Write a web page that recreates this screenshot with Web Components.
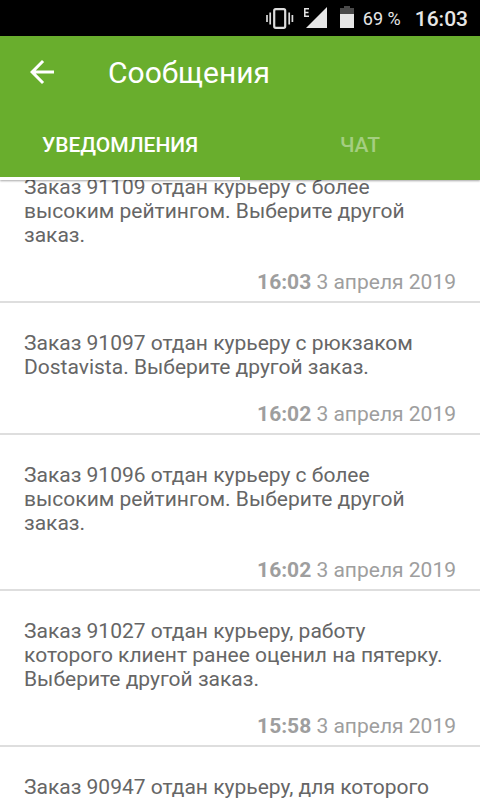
<!DOCTYPE html>
<html lang="ru">
<head>
  <meta charset="utf-8">
  <meta name="viewport" content="width=device-width, initial-scale=1">
  <title>Сообщения</title>
  <style>
    body {
      margin: 0;
      font-family: Roboto, "Noto Sans", sans-serif;
      background: #fff;
    }
  </style>
</head>
<body>
  <messages-screen>
    <status-bar slot="top" battery="69 %" time="16:03"></status-bar>
    <app-header slot="top" heading="Сообщения">
      <header-tab selected>УВЕДОМЛЕНИЯ</header-tab>
      <header-tab>ЧАТ</header-tab>
    </app-header>
    <message-item time="16:03" date="3 апреля 2019">Заказ 91109 отдан курьеру с более высоким рейтингом. Выберите другой заказ.</message-item>
    <message-item time="16:02" date="3 апреля 2019">Заказ 91097 отдан курьеру с рюкзаком Dostavista. Выберите другой заказ.</message-item>
    <message-item time="16:02" date="3 апреля 2019">Заказ 91096 отдан курьеру с более высоким рейтингом. Выберите другой заказ.</message-item>
    <message-item time="15:58" date="3 апреля 2019">Заказ 91027 отдан курьеру, работу которого клиент ранее оценил на пятерку. Выберите другой заказ.</message-item>
    <message-item>Заказ 90947 отдан курьеру, для которого</message-item>
  </messages-screen>

  <script>
    // Системная строка: вибрация, сеть, батарея, часы
    class StatusBar extends HTMLElement {
      constructor() {
        super();
        const shadow = this.attachShadow({ mode: 'open' });
        shadow.innerHTML = `
          <style>
            :host {
              display: flex;
              align-items: center;
              justify-content: flex-end;
              height: 36px;
              padding: 0 12px;
              background: #000;
              color: #e6e6e6;
            }
            svg { display: block; flex: none; }
            .signal { margin-left: 10px; }
            .battery { margin-left: 12px; }
            .level { margin-left: 9px; font-size: 18px; line-height: 36px; padding-top: 1px; }
            .clock { margin-left: 14px; font-size: 21px; font-weight: 500; line-height: 36px; padding-top: 1px; }
          </style>
          <svg width="28" height="36" viewBox="0 0 28 36" aria-hidden="true">
            <rect x="8.2" y="9.2" width="11" height="18.6" rx="1.5" fill="none" stroke="#dcdcdc" stroke-width="2.2"/>
            <path d="M1 15v7M4.2 12.5v12M23.2 12.5v12M26.4 15v7" fill="none" stroke="#dcdcdc" stroke-width="1.7"/>
          </svg>
          <svg class="signal" width="24" height="36" viewBox="0 0 24 36" aria-hidden="true">
            <path d="M5 8.7H.8v7.6H5M.8 12.4h3.7" fill="none" stroke="#e6e6e6" stroke-width="1.5"/>
            <path d="M23 7v21H2z" fill="#e6e6e6"/>
          </svg>
          <svg class="battery" width="14" height="36" viewBox="0 0 14 36" aria-hidden="true">
            <path d="M4 6h6v2h4v6H0V8h4z" fill="#4a4a4a"/>
            <path d="M0 14h14v14H0z" fill="#e6e6e6"/>
          </svg>
          <span class="level"></span>
          <span class="clock"></span>
        `;
      }

      connectedCallback() {
        this.shadowRoot.querySelector('.level').textContent = this.getAttribute('battery');
        this.shadowRoot.querySelector('.clock').textContent = this.getAttribute('time');
      }
    }

    // Зелёная шапка с кнопкой «назад» и вкладками
    class AppHeader extends HTMLElement {
      constructor() {
        super();
        const shadow = this.attachShadow({ mode: 'open' });
        shadow.innerHTML = `
          <style>
            :host {
              display: block;
              background: #69ae2d;
              color: #fff;
              box-shadow: 0 1px 2px rgba(0, 0, 0, 0.35);
            }
            .toolbar { display: flex; align-items: center; height: 72px; }
            button {
              display: flex;
              align-items: center;
              justify-content: center;
              width: 84px;
              height: 72px;
              padding: 0;
              border: none;
              background: none;
              color: inherit;
              cursor: pointer;
            }
            h1 { margin: 0 0 0 24px; padding-top: 2px; font-size: 30px; font-weight: 400; line-height: 36px; }
            .tabs { display: flex; height: 72px; }
          </style>
          <div class="toolbar">
            <button type="button" aria-label="Назад">
              <svg width="36" height="36" viewBox="0 0 24 24" aria-hidden="true">
                <path d="M20 11H7.83l5.59-5.59L12 4l-8 8 8 8 1.41-1.41L7.83 13H20v-2z" fill="currentColor"/>
              </svg>
            </button>
            <h1></h1>
          </div>
          <div class="tabs" role="tablist"><slot></slot></div>
        `;
      }

      connectedCallback() {
        this.shadowRoot.querySelector('h1').textContent = this.getAttribute('heading');
      }
    }

    class HeaderTab extends HTMLElement {
      constructor() {
        super();
        const shadow = this.attachShadow({ mode: 'open' });
        shadow.innerHTML = `
          <style>
            :host { display: flex; flex: 1; }
            button {
              flex: 1;
              padding: 5px 0 0;
              border: none;
              border-bottom: 3px solid transparent;
              background: none;
              color: #a5ce81;
              font: 500 21px/24px Roboto, "Noto Sans", sans-serif;
              cursor: pointer;
            }
            :host([selected]) button { color: #fff; border-bottom-color: #fff; }
          </style>
          <button type="button" role="tab"><slot></slot></button>
        `;
      }

      connectedCallback() {
        this.shadowRoot.querySelector('button').setAttribute('aria-selected', this.hasAttribute('selected'));
      }
    }

    class MessageItem extends HTMLElement {
      constructor() {
        super();
        const shadow = this.attachShadow({ mode: 'open' });
        shadow.innerHTML = `
          <style>
            :host {
              display: block;
              padding: 28px 24px 7px;
              border-bottom: 2px solid #dedede;
              font-size: 21px;
              line-height: 24px;
              color: #666;
            }
            p { margin: 0; }
            .when { margin-top: 23px; min-height: 24px; text-align: right; color: #9e9e9e; }
          </style>
          <p><slot></slot></p>
          <p class="when"><b></b> <span></span></p>
        `;
      }

      connectedCallback() {
        this.shadowRoot.querySelector('b').textContent = this.getAttribute('time') || '';
        this.shadowRoot.querySelector('span').textContent = this.getAttribute('date') || '';
      }
    }

    class MessagesScreen extends HTMLElement {
      constructor() {
        super();
        const shadow = this.attachShadow({ mode: 'open' });
        shadow.innerHTML = `
          <style>
            :host { display: flex; flex-direction: column; height: 100vh; }
            .top { position: relative; z-index: 1; }
            .list { flex: 1; min-height: 0; overflow-y: auto; scrollbar-width: none; }
          </style>
          <div class="top"><slot name="top"></slot></div>
          <div class="list"><slot></slot></div>
        `;
      }
    }

    customElements.define('status-bar', StatusBar);
    customElements.define('app-header', AppHeader);
    customElements.define('header-tab', HeaderTab);
    customElements.define('message-item', MessageItem);
    customElements.define('messages-screen', MessagesScreen);

    // Лента открывается немного прокрученной
    document.querySelector('messages-screen').shadowRoot.querySelector('.list').scrollTop = 33;
  </script>
</body>
</html>
